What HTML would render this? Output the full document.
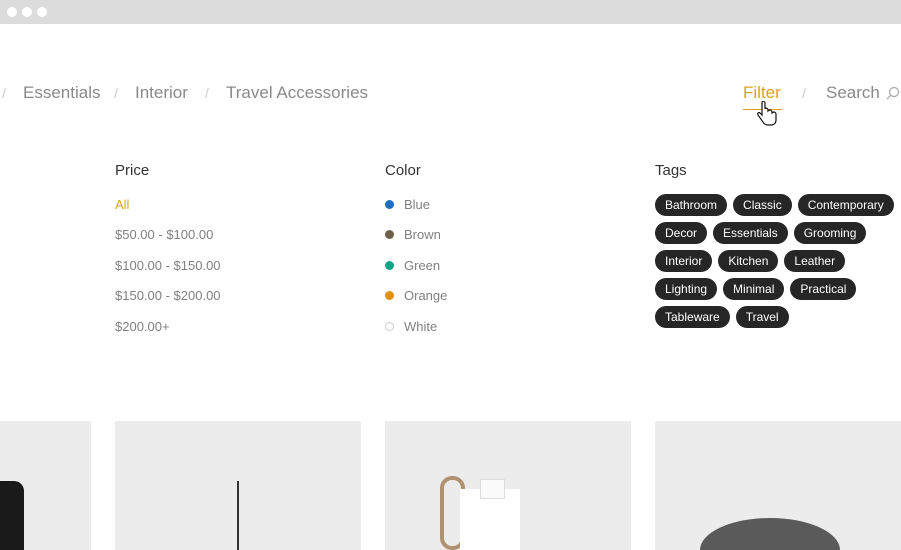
<!DOCTYPE html>
<html><head><style>
*{margin:0;padding:0;box-sizing:border-box}
html,body{width:901px;height:550px;overflow:hidden}
body{background:#fff;font-family:"Liberation Sans",sans-serif;position:relative}
.bar{position:absolute;left:0;top:0;width:901px;height:24px;background:#dcdcdc}
.dot{position:absolute;top:7px;width:10px;height:10px;border-radius:50%;background:#fff}
.t{position:absolute;white-space:nowrap}
.nav{top:83px;font-size:17px;color:#8a8a8a}
.sl{top:85px;font-size:14px;color:#ccc}
h3{position:absolute;top:162px;font-size:15px;font-weight:normal;color:#333}
.li{position:absolute;font-size:13px;color:#808080}
.c{display:inline-block;width:9px;height:9px;border-radius:50%;margin-right:10px;vertical-align:0px}
.tags{position:absolute;left:655px;top:194px;width:246px}
.tag{display:inline-block;height:22px;line-height:23px;padding:0 10px;background:#262626;color:#fff;font-size:12px;border-radius:11px;margin:0 6px 6px 0}
.card{position:absolute;top:421px;height:129px;background:#ececec;overflow:hidden}
</style></head><body>
<div class="bar"><div class="dot" style="left:7px"></div><div class="dot" style="left:22px"></div><div class="dot" style="left:37px"></div></div>
<div class="t sl" style="left:2px">/</div>
<div class="t nav" style="left:23px">Essentials</div>
<div class="t sl" style="left:114px">/</div>
<div class="t nav" style="left:135px">Interior</div>
<div class="t sl" style="left:205px">/</div>
<div class="t nav" style="left:226px">Travel Accessories</div>
<div class="t nav" style="left:743px;color:#e0a01c">Filter</div>
<div style="position:absolute;left:743px;top:109px;width:39px;height:1px;background:#e0a01c"></div>
<div class="t sl" style="left:802px">/</div>
<div class="t nav" style="left:826px">Search</div>
<svg style="position:absolute;left:886px;top:86px" width="14" height="14" viewBox="0 0 14 14"><circle cx="8" cy="6" r="4.5" fill="none" stroke="#aaa" stroke-width="1.3"/><line x1="4.8" y1="9.2" x2="1" y2="13" stroke="#aaa" stroke-width="1.3"/></svg>
<svg style="position:absolute;left:756px;top:101px" width="22" height="26" viewBox="0 0 22 26"><path d="M6 2v12l-2-2c-1-1-3 0-2 2l5 7c1 2 3 3 5 3h3c3 0 5-2 5-5v-6c0-1-1-2-2-2s-2 1-2 1v-1c0-1-1-2-2-2s-2 1-2 1v-1c0-1-1-2-2-2s-1 1-1 1V2c0-1-1-2-2-2S6 1 6 2z" fill="#fff" stroke="#111" stroke-width="1.2"/></svg>
<h3 style="left:115px">Price</h3>
<h3 style="left:385px">Color</h3>
<h3 style="left:655px">Tags</h3>
<div class="li" style="left:115px;top:197px;color:#e0a01c">All</div>
<div class="li" style="left:115px;top:227px">$50.00 - $100.00</div>
<div class="li" style="left:115px;top:258px">$100.00 - $150.00</div>
<div class="li" style="left:115px;top:288px">$150.00 - $200.00</div>
<div class="li" style="left:115px;top:319px">$200.00+</div>
<div class="li" style="left:385px;top:197px"><span class="c" style="background:#1e6fc0"></span>Blue</div>
<div class="li" style="left:385px;top:227px"><span class="c" style="background:#6e5f48"></span>Brown</div>
<div class="li" style="left:385px;top:258px"><span class="c" style="background:#13a387"></span>Green</div>
<div class="li" style="left:385px;top:288px"><span class="c" style="background:#e0920f"></span>Orange</div>
<div class="li" style="left:385px;top:319px"><span class="c" style="border:1px solid #ccc"></span>White</div>
<div class="tags"><span class="tag">Bathroom</span><span class="tag">Classic</span><span class="tag">Contemporary</span><span class="tag">Decor</span><span class="tag">Essentials</span><span class="tag">Grooming</span><span class="tag">Interior</span><span class="tag">Kitchen</span><span class="tag">Leather</span><span class="tag">Lighting</span><span class="tag">Minimal</span><span class="tag">Practical</span><span class="tag">Tableware</span><span class="tag">Travel</span></div>
<div class="card" style="left:0;width:91px"><div style="position:absolute;left:0;top:60px;width:24px;height:69px;background:#1a1a1a;border-radius:0 10px 0 0"></div></div>
<div class="card" style="left:115px;width:246px"><div style="position:absolute;left:122px;top:60px;width:2px;height:69px;background:#333"></div></div>
<div class="card" style="left:385px;width:246px"><div style="position:absolute;left:55px;top:55px;width:25px;height:74px;border:4px solid #b09270;border-radius:12px"></div><div style="position:absolute;left:75px;top:68px;width:60px;height:61px;background:#fff"></div><div style="position:absolute;left:95px;top:58px;width:25px;height:20px;background:#fafafa;border:1px solid #ddd"></div></div>
<div class="card" style="left:655px;width:246px"><div style="position:absolute;left:45px;top:97px;width:140px;height:32px;background:#5a5a5a;border-radius:70px 70px 0 0/32px 32px 0 0"></div></div>
</body></html>
